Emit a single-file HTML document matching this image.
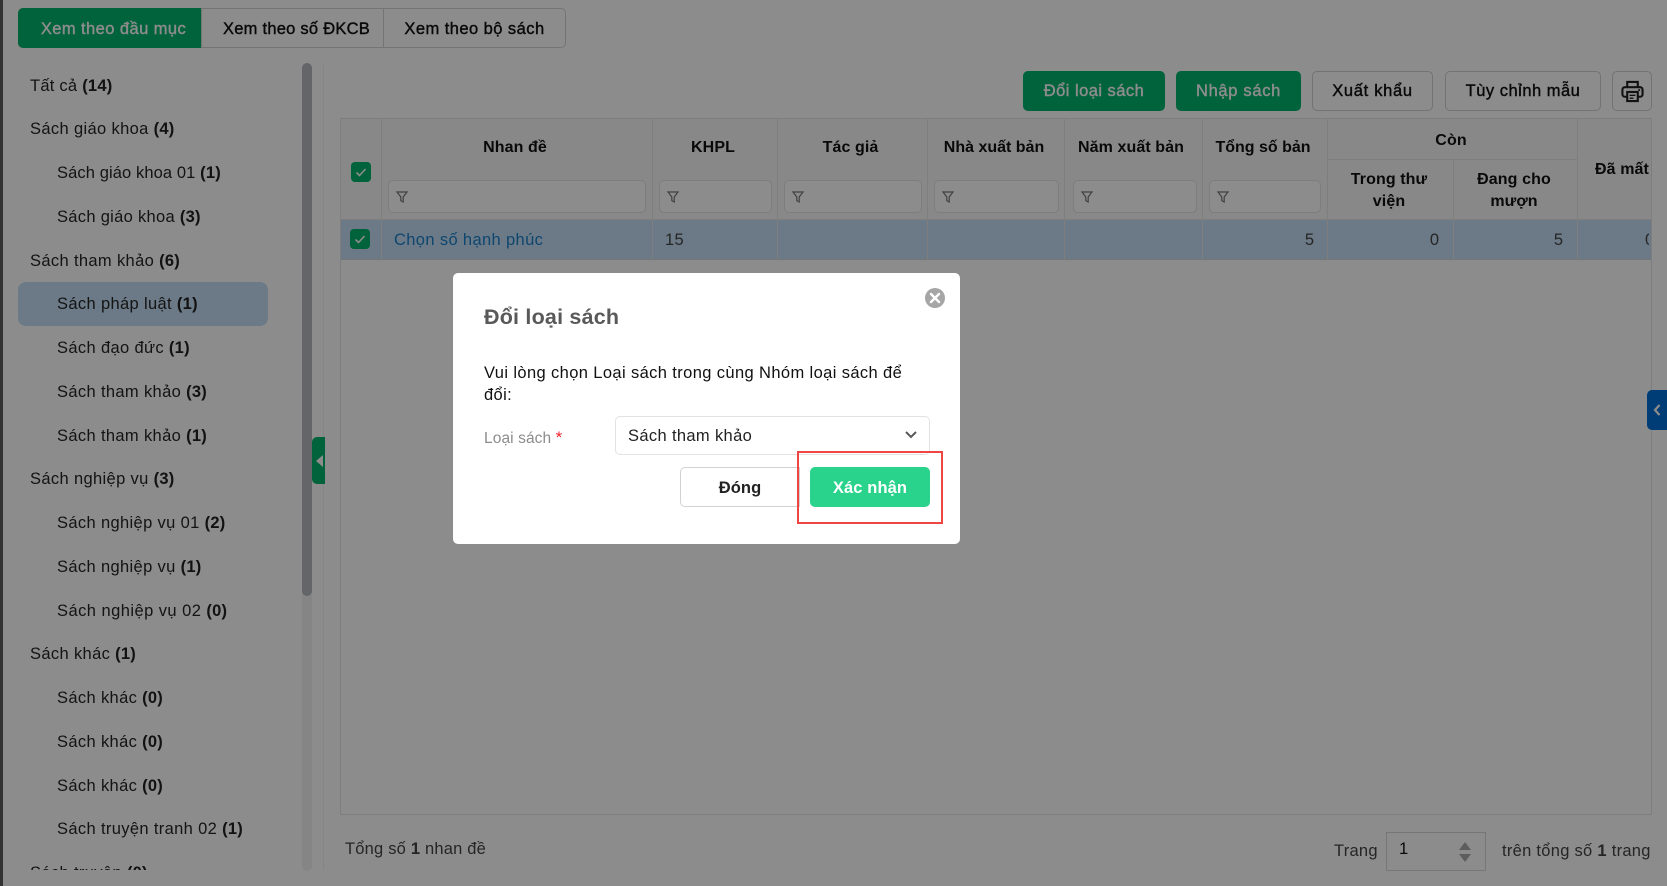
<!DOCTYPE html>
<html lang="vi"><head><meta charset="utf-8"><title>Đổi loại sách</title>
<style>
*{box-sizing:border-box}
html,body{margin:0;padding:0}
body{width:1667px;height:886px;overflow:hidden;position:relative;background:#fff;font-family:"Liberation Sans",sans-serif;font-size:16.5px;color:#262626}
.a{position:absolute}
.t{position:absolute;white-space:nowrap;line-height:24px;height:24px}
.c{text-align:center}
.m{-webkit-text-stroke:.4px currentColor}
.side{letter-spacing:.35px}
.side b{font-weight:bold;letter-spacing:.25px;color:#222}
.btn{position:absolute;top:71px;height:40px;border-radius:5px;line-height:39px;text-align:center;white-space:nowrap;-webkit-text-stroke:.4px currentColor}
.g{background:#00b56c;color:#fff;border:1px solid #00b56c}
.w{background:#fff;color:#111;border:1px solid #d2d2d2}
.vl{position:absolute;width:1px;background:#e6e6e6}
.hl{position:absolute;height:1px;background:#e6e6e6}
.f{position:absolute;top:180px;height:33px;background:#fff;border:1px solid #e4e4e4;border-radius:5px}
.f svg{position:absolute;left:6px;top:9px}
.h{position:absolute;font-weight:bold;color:#111;text-align:center;line-height:22px;letter-spacing:.1px;font-size:16px}
.cb{position:absolute;width:20px;height:20px;border-radius:4px;background:#00b56c}
.cb svg{position:absolute;left:3px;top:3px}
</style></head><body>

<!-- tabs -->
<div class="a" style="left:18px;top:8px;width:548px;height:40px;border:1px solid #d4d4d4;border-radius:5px"></div>
<div class="a" style="left:18px;top:8px;width:183px;height:40px;background:#00b56c;border-radius:5px 0 0 5px"></div>
<div class="vl" style="left:201px;top:9px;height:38px;background:#d4d4d4"></div>
<div class="vl" style="left:383px;top:9px;height:38px;background:#d4d4d4"></div>
<div class="t c m" style="left:22px;top:17px;width:183px;color:#fff;letter-spacing:.43px">Xem theo đầu mục</div>
<div class="t c m" style="left:206px;top:17px;width:181px;color:#111;letter-spacing:.25px">Xem theo số ĐKCB</div>
<div class="t c m" style="left:384px;top:17px;width:181px;color:#111;letter-spacing:.45px">Xem theo bộ sách</div>

<!-- sidebar -->
<div class="a" style="left:18px;top:282px;width:250px;height:44px;background:#c4dff5;border-radius:8px"></div>
<div class="a side" style="left:0;top:60px;width:300px;height:810px;overflow:hidden">
<div class="t" style="left:30px;top:14px;letter-spacing:.25px">Tất cả <b>(14)</b></div>
<div class="t" style="left:30px;top:57px">Sách giáo khoa <b>(4)</b></div>
<div class="t" style="left:57px;top:101px;letter-spacing:.1px">Sách giáo khoa 01 <b>(1)</b></div>
<div class="t" style="left:57px;top:145px;letter-spacing:.3px">Sách giáo khoa <b>(3)</b></div>
<div class="t" style="left:30px;top:189px">Sách tham khảo <b>(6)</b></div>
<div class="t" style="left:57px;top:232px">Sách pháp luật <b>(1)</b></div>
<div class="t" style="left:57px;top:276px">Sách đạo đức <b>(1)</b></div>
<div class="t" style="left:57px;top:320px">Sách tham khảo <b>(3)</b></div>
<div class="t" style="left:57px;top:364px">Sách tham khảo <b>(1)</b></div>
<div class="t" style="left:30px;top:407px">Sách nghiệp vụ <b>(3)</b></div>
<div class="t" style="left:57px;top:451px">Sách nghiệp vụ 01 <b>(2)</b></div>
<div class="t" style="left:57px;top:495px">Sách nghiệp vụ <b>(1)</b></div>
<div class="t" style="left:57px;top:539px;letter-spacing:.45px">Sách nghiệp vụ 02 <b>(0)</b></div>
<div class="t" style="left:30px;top:582px">Sách khác <b>(1)</b></div>
<div class="t" style="left:57px;top:626px">Sách khác <b>(0)</b></div>
<div class="t" style="left:57px;top:670px">Sách khác <b>(0)</b></div>
<div class="t" style="left:57px;top:714px">Sách khác <b>(0)</b></div>
<div class="t" style="left:57px;top:757px">Sách truyện tranh 02 <b>(1)</b></div>
<div class="t" style="left:30px;top:801px">Sách truyện <b>(0)</b></div>
</div>

<!-- scrollbar + divider + toggle -->
<div class="a" style="left:302px;top:63px;width:10px;height:808px;background:#f2f2f2;border-radius:5px"></div>
<div class="a" style="left:302px;top:63px;width:10px;height:533px;background:#b5b8bd;border-radius:5px"></div>
<div class="vl" style="left:323px;top:63px;height:807px;background:#f2f2f2"></div>
<div class="a" style="left:312px;top:437px;width:13px;height:47px;background:#00b56c;border-radius:5px 0 0 5px"></div>
<div class="a" style="left:316px;top:455px;width:0;height:0;border-top:6px solid transparent;border-bottom:6px solid transparent;border-right:7px solid #fff"></div>

<!-- toolbar -->
<div class="btn g" style="left:1023px;width:142px;letter-spacing:.46px">Đổi loại sách</div>
<div class="btn g" style="left:1176px;width:125px;letter-spacing:.68px">Nhập sách</div>
<div class="btn w" style="left:1312px;width:121px;letter-spacing:.69px">Xuất khẩu</div>
<div class="btn w" style="left:1445px;width:156px;letter-spacing:.5px">Tùy chỉnh mẫu</div>
<div class="btn w" style="left:1612px;width:40px"></div>
<svg class="a" style="left:1621px;top:79px" width="23" height="24" viewBox="0 0 24 24" fill="none" stroke="#222" stroke-width="2.200"><path d="M6.500 8V2.500h11V8"/><rect x="1.500" y="8" width="21" height="10" rx="2.500"/><rect x="6.500" y="13" width="11" height="9.500" fill="#fff"/><path d="M9 16.500h6M9 19.500h4" stroke-width="1.500"/><circle cx="19" cy="11" r=".6" fill="#222" stroke-width="1"/></svg>

<!-- table frame -->
<div class="a" style="left:340px;top:119px;width:1312px;height:100px;background:#f8f8f8"></div>
<div class="a" style="left:340px;top:219px;width:1311px;height:40px;background:#c4dff5"></div>
<div class="hl" style="left:340px;top:118px;width:1312px"></div>
<div class="hl" style="left:340px;top:219px;width:1312px"></div>
<div class="hl" style="left:340px;top:259px;width:1312px;background:#d8d8d8"></div>
<div class="hl" style="left:340px;top:814px;width:1312px"></div>
<div class="vl" style="left:340px;top:118px;height:697px"></div>
<div class="vl" style="left:1651px;top:118px;height:697px"></div>
<div class="hl" style="left:1327px;top:159px;width:250px"></div>
<div class="vl" style="left:381px;top:119px;height:140px"></div>
<div class="vl" style="left:652px;top:119px;height:140px"></div>
<div class="vl" style="left:777px;top:119px;height:140px"></div>
<div class="vl" style="left:927px;top:119px;height:140px"></div>
<div class="vl" style="left:1064px;top:119px;height:140px"></div>
<div class="vl" style="left:1202px;top:119px;height:140px"></div>
<div class="vl" style="left:1327px;top:119px;height:140px"></div>
<div class="vl" style="left:1453px;top:159px;height:100px"></div>
<div class="vl" style="left:1577px;top:119px;height:140px"></div>

<!-- table headers -->
<div class="h" style="left:381px;top:137px;width:268px">Nhan đề</div>
<div class="h" style="left:653px;top:137px;width:120px">KHPL</div>
<div class="h" style="left:777px;top:137px;width:147px">Tác giả</div>
<div class="h" style="left:927px;top:137px;width:134px;letter-spacing:0">Nhà xuất bản</div>
<div class="h" style="left:1064px;top:137px;width:134px;letter-spacing:.1px">Năm xuất bản</div>
<div class="h" style="left:1202px;top:137px;width:122px;letter-spacing:0">Tổng số bản</div>
<div class="h" style="left:1326px;top:130px;width:250px">Còn</div>
<div class="h" style="left:1327px;top:169px;width:124px">Trong thư<br>viện</div>
<div class="h" style="left:1453px;top:169px;width:122px">Đang cho<br>mượn</div>
<div class="a" style="left:1578px;top:158px;width:71px;height:24px;overflow:hidden"><div class="h" style="left:17px;top:1px;width:90px;text-align:left">Đã mất</div></div>

<!-- filters -->
<div class="f" style="left:388px;width:258px"><svg width="14" height="14" viewBox="0 0 14 14" fill="#fff" stroke="#777" stroke-width="1.200"><path d="M2 2h10L8.200 7v5l-2.400-1.400V7z"/></svg></div>
<div class="f" style="left:659px;width:113px"><svg width="14" height="14" viewBox="0 0 14 14" fill="#fff" stroke="#777" stroke-width="1.200"><path d="M2 2h10L8.200 7v5l-2.400-1.400V7z"/></svg></div>
<div class="f" style="left:784px;width:138px"><svg width="14" height="14" viewBox="0 0 14 14" fill="#fff" stroke="#777" stroke-width="1.200"><path d="M2 2h10L8.200 7v5l-2.400-1.400V7z"/></svg></div>
<div class="f" style="left:934px;width:125px"><svg width="14" height="14" viewBox="0 0 14 14" fill="#fff" stroke="#777" stroke-width="1.200"><path d="M2 2h10L8.200 7v5l-2.400-1.400V7z"/></svg></div>
<div class="f" style="left:1073px;width:124px"><svg width="14" height="14" viewBox="0 0 14 14" fill="#fff" stroke="#777" stroke-width="1.200"><path d="M2 2h10L8.200 7v5l-2.400-1.400V7z"/></svg></div>
<div class="f" style="left:1209px;width:112px"><svg width="14" height="14" viewBox="0 0 14 14" fill="#fff" stroke="#777" stroke-width="1.200"><path d="M2 2h10L8.200 7v5l-2.400-1.400V7z"/></svg></div>

<!-- checkboxes -->
<div class="cb" style="left:351px;top:162px"><svg width="14" height="14" viewBox="0 0 14 14" fill="none" stroke="#fff" stroke-width="1.600"><path d="M2.500 7.500l3 3 6-6.500"/></svg></div>
<div class="cb" style="left:350px;top:229px"><svg width="14" height="14" viewBox="0 0 14 14" fill="none" stroke="#fff" stroke-width="1.600"><path d="M2.500 7.500l3 3 6-6.500"/></svg></div>

<!-- row -->
<div class="t" style="left:394px;top:228px;color:#1a80cc;letter-spacing:.36px">Chọn số hạnh phúc</div>
<div class="t" style="left:665px;top:228px;color:#444;letter-spacing:.3px">15</div>
<div class="t" style="left:1280px;top:228px;width:34px;text-align:right;color:#444">5</div>
<div class="t" style="left:1405px;top:228px;width:34px;text-align:right;color:#444">0</div>
<div class="t" style="left:1529px;top:228px;width:34px;text-align:right;color:#444">5</div>
<div class="a" style="left:1620px;top:228px;width:29px;height:24px;overflow:hidden"><div class="t" style="left:25px;top:0;color:#444">0</div></div>

<!-- footer -->
<div class="t" style="left:345px;top:837px;color:#444;letter-spacing:.2px">Tổng số <b>1</b> nhan đề</div>
<div class="t" style="left:1334px;top:839px;color:#444;letter-spacing:.25px">Trang</div>
<div class="a" style="left:1386px;top:832px;width:100px;height:39px;border:1px solid #d8d8d8"></div>
<div class="t" style="left:1399px;top:837px;color:#111">1</div>
<div class="a" style="left:1459px;top:842px;width:0;height:0;border-left:6.500px solid transparent;border-right:6.500px solid transparent;border-bottom:8px solid #aaa"></div>
<div class="a" style="left:1459px;top:854px;width:0;height:0;border-left:6.500px solid transparent;border-right:6.500px solid transparent;border-top:8px solid #aaa"></div>
<div class="t" style="left:1502px;top:839px;color:#444;letter-spacing:.28px">trên tổng số <b>1</b> trang</div>

<!-- right tab -->
<div class="a" style="left:1647px;top:390px;width:20px;height:40px;background:#0070d8;border-radius:5px 0 0 5px"></div>
<svg class="a" style="left:1652px;top:403px" width="10" height="14" viewBox="0 0 10 14" fill="none" stroke="#fff" stroke-width="2.200"><path d="M7.500 2L3 7l4.500 5"/></svg>

<!-- overlay -->
<div class="a" style="left:0;top:0;width:1667px;height:886px;background:rgba(0,0,0,.45)"></div>
<div class="a" style="left:0;top:0;width:3px;height:886px;background:#333"></div>

<!-- modal -->
<div class="a" style="left:453px;top:273px;width:507px;height:271px;background:#fff;border-radius:5px"></div>
<div class="t" style="left:484px;top:305px;font-size:21.500px;font-weight:bold;color:#595959;letter-spacing:.2px">Đổi loại sách</div>
<svg class="a" style="left:925px;top:288px" width="20" height="20" viewBox="0 0 20 20"><circle cx="10" cy="10" r="10" fill="#a6a6a6"/><path d="M6 6l8 8M14 6l-8 8" stroke="#fff" stroke-width="2.400" stroke-linecap="round"/></svg>
<div class="t" style="left:484px;top:361px;color:#111;letter-spacing:.38px">Vui lòng chọn Loại sách trong cùng Nhóm loại sách để</div>
<div class="t" style="left:484px;top:383px;color:#111;letter-spacing:.38px">đổi:</div>
<div class="t" style="left:484px;top:426px;color:#8c8c8c;font-size:15.500px;letter-spacing:.1px">Loại sách <span style="color:#f5222d;font-size:17px">*</span></div>
<div class="a" style="left:615px;top:416px;width:315px;height:39px;border:1px solid #e2e2e2;border-radius:5px"></div>
<div class="t" style="left:628px;top:424px;color:#222;letter-spacing:.35px">Sách tham khảo</div>
<svg class="a" style="left:904px;top:430px" width="14" height="10" viewBox="0 0 14 10" fill="none" stroke="#595959" stroke-width="2"><path d="M2 2l5 5 5-5"/></svg>
<div class="a" style="left:680px;top:467px;width:120px;height:40px;border:1px solid #d2d2d2;border-radius:5px 0 0 5px;border-right:1px solid #d2d2d2"></div>
<div class="t c" style="left:680px;top:476px;width:120px;font-weight:bold;color:#222;letter-spacing:.1px">Đóng</div>
<div class="a" style="left:810px;top:467px;width:120px;height:40px;background:#29d38b;border-radius:5px"></div>
<div class="t c" style="left:810px;top:476px;width:120px;font-weight:bold;color:#fff;letter-spacing:.1px">Xác nhận</div>
<div class="a" style="left:797px;top:451px;width:146px;height:73px;border:2px solid #f04545"></div>
</body></html>
